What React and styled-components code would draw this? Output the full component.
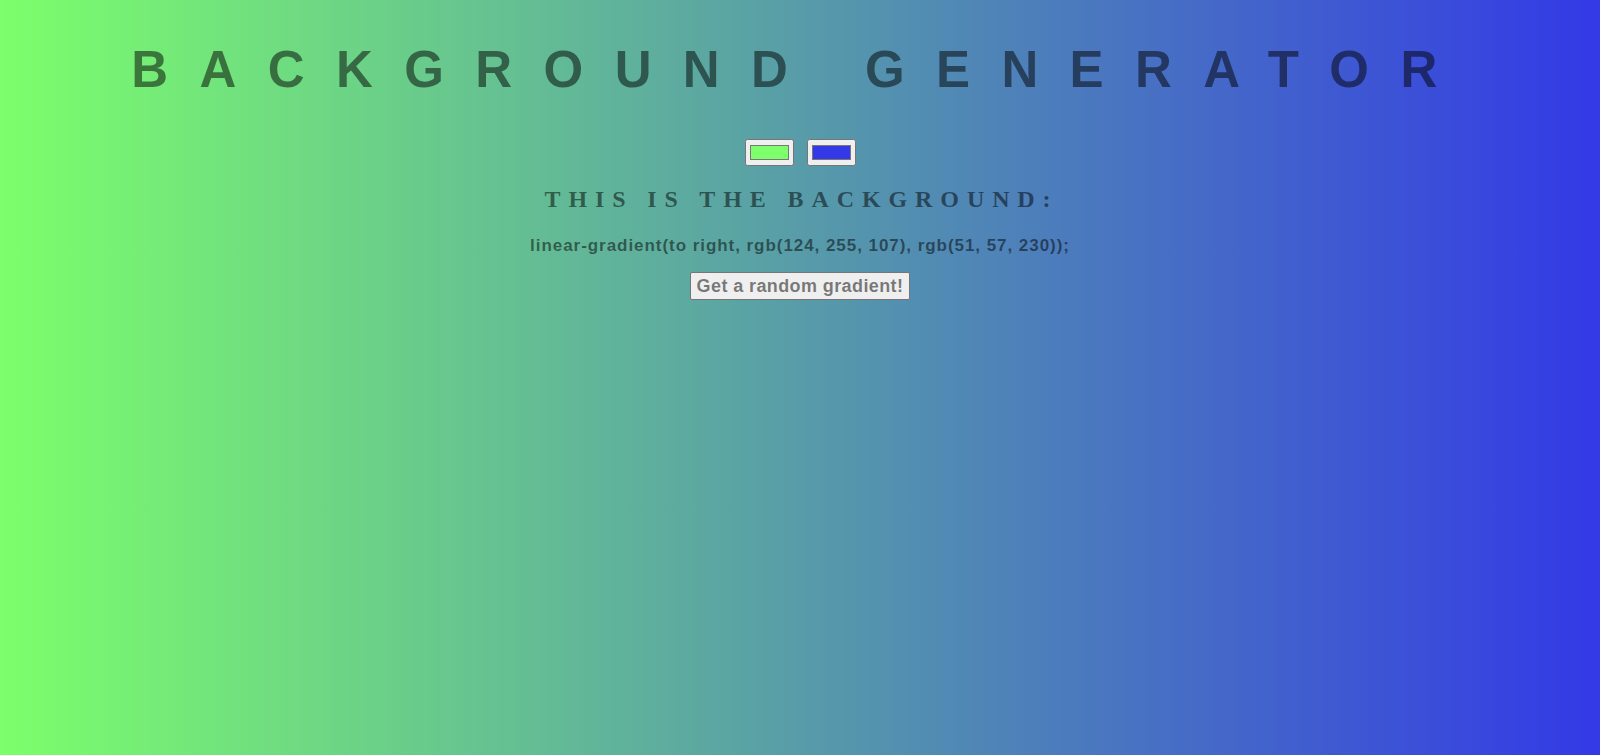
import React, { useState } from "react";
import styled, { createGlobalStyle } from "styled-components";

const GlobalStyle = createGlobalStyle`
  html, body {
    margin: 0;
    padding: 0;
  }
  body {
    min-height: 100vh;
    font-family: "Liberation Sans", Arial, sans-serif;
  }
`;

const Page = styled.div`
  min-height: 100vh;
  display: flex;
  flex-direction: column;
  align-items: center;
  text-align: center;
  background: ${(p) => p.$gradient};
`;

const Title = styled.h1`
  margin: 40px 0 0;
  font-family: "Liberation Sans", Arial, sans-serif;
  font-weight: bold;
  font-size: 51px;
  line-height: 59px;
  letter-spacing: 31.4px;
  text-transform: uppercase;
  color: rgba(0, 0, 0, 0.5);
`;

const Pickers = styled.div`
  display: flex;
  gap: 13px;
  margin-top: 40px;
`;

const ColorInput = styled.input`
  width: 49px;
  height: 27px;
  margin: 0;
`;

const Heading = styled.h3`
  margin: 19px 0 0;
  padding-left: 3px;
  font-family: "Liberation Serif", "Times New Roman", serif;
  font-weight: bold;
  font-size: 24px;
  line-height: 28px;
  letter-spacing: 7.9px;
  text-transform: uppercase;
  color: rgba(0, 0, 0, 0.5);
`;

const Css = styled.p`
  margin: 23px 0 0;
  font-family: "Liberation Sans", Arial, sans-serif;
  font-weight: bold;
  font-size: 17px;
  line-height: 20px;
  letter-spacing: 0.95px;
  color: rgba(0, 0, 0, 0.5);
`;

const RandomButton = styled.button`
  margin-top: 16px;
  height: 28px;
  padding: 0 6px;
  font-family: "Liberation Sans", Arial, sans-serif;
  font-weight: bold;
  font-size: 18px;
  letter-spacing: 0.4px;
  color: rgba(0, 0, 0, 0.5);
  background: #efefef;
  border: 1px solid #767676;
  border-radius: 2px;
  cursor: pointer;
`;

const toHex = (rgb) =>
  "#" + rgb.map((v) => v.toString(16).padStart(2, "0")).join("");

const fromHex = (hex) => [1, 3, 5].map((i) => parseInt(hex.slice(i, i + 2), 16));

const randomRgb = () => [0, 0, 0].map(() => Math.floor(Math.random() * 256));

export default function App() {
  const [c1, setC1] = useState([124, 255, 107]);
  const [c2, setC2] = useState([51, 57, 230]);

  const gradient = `linear-gradient(to right, rgb(${c1.join(", ")}), rgb(${c2.join(", ")}))`;

  return (
    <Page $gradient={gradient}>
      <GlobalStyle />
      <Title>Background Generator</Title>
      <Pickers>
        <ColorInput
          type="color"
          value={toHex(c1)}
          onChange={(e) => setC1(fromHex(e.target.value))}
        />
        <ColorInput
          type="color"
          value={toHex(c2)}
          onChange={(e) => setC2(fromHex(e.target.value))}
        />
      </Pickers>
      <Heading>This is the background:</Heading>
      <Css>{gradient};</Css>
      <RandomButton
        onClick={() => {
          setC1(randomRgb());
          setC2(randomRgb());
        }}>
        Get a random gradient!
      </RandomButton>
    </Page>
  );
}
